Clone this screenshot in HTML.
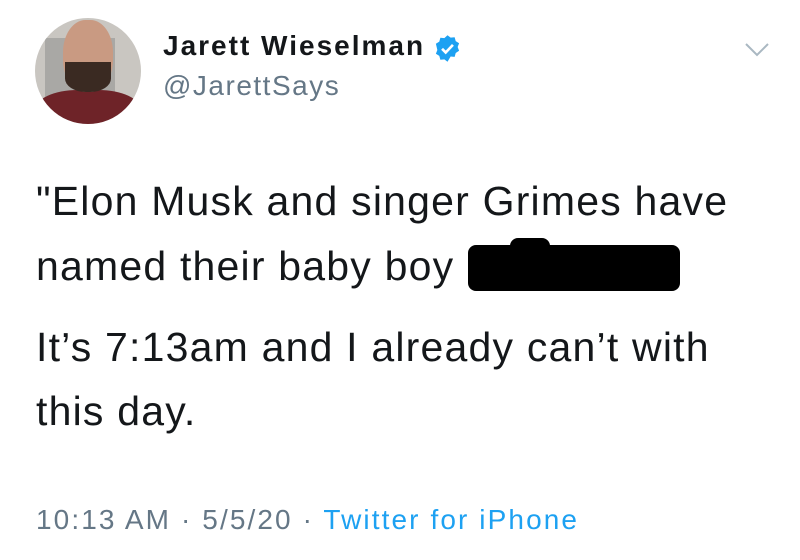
<!DOCTYPE html>
<html><head><style>
body{margin:0;width:800px;height:560px;background:#fff;font-family:"Liberation Sans",sans-serif;position:relative;overflow:hidden}
.a{position:absolute;white-space:nowrap}
.t{font-size:41px;color:#14171a;letter-spacing:1.2px}
</style></head><body>
<div class="a" style="left:35px;top:18px;width:106px;height:106px;border-radius:50%;overflow:hidden;background:#c9c6c1">
 <div class="a" style="left:10px;top:20px;width:70px;height:60px;background:#a9a8a5"></div>
 <div class="a" style="left:0;top:72px;width:106px;height:50px;border-radius:40% 40% 0 0;background:#6e2328"></div>
 <div class="a" style="left:28px;top:2px;width:50px;height:72px;border-radius:45%;background:#c99a82"></div>
 <div class="a" style="left:30px;top:44px;width:46px;height:30px;border-radius:0 0 45% 45%;background:#3a2a22"></div>
</div>
<div class="a" style="left:163px;top:30px;font-size:28px;font-weight:bold;color:#14171a;letter-spacing:2px">Jarett Wieselman</div>
<svg class="a" style="left:433px;top:34px" width="29" height="29" viewBox="0 0 24 24"><path fill="#1da1f2" d="M12 1l2.6 2 3.3-.3.9 3.2 2.8 1.8-1.2 3.1 1.2 3.1-2.8 1.8-.9 3.2-3.3-.3L12 23l-2.6-2-3.3.3-.9-3.2-2.8-1.8 1.2-3.1L2.4 8.1l2.8-1.8.9-3.2 3.3.3z"/><path d="M7.5 12.3l3 3 6-6.3" stroke="#fff" stroke-width="2.2" fill="none"/></svg>
<div class="a" style="left:163px;top:70px;font-size:28px;color:#657786;letter-spacing:1.5px">@JarettSays</div>
<svg class="a" style="left:744px;top:42px" width="26" height="16"><path d="M2 2l11 11 11-11" stroke="#aab8c2" stroke-width="2" fill="none"/></svg>
<div class="a t" style="left:36px;top:178px">"Elon Musk and singer Grimes have</div>
<div class="a t" style="left:36px;top:243px">named their baby boy</div>
<div class="a" style="left:468px;top:245px;width:212px;height:46px;background:#000;border-radius:8px"></div>
<div class="a" style="left:510px;top:238px;width:40px;height:16px;background:#000;border-radius:8px"></div>
<div class="a t" style="left:36px;top:324px">It’s 7:13am and I already can’t with</div>
<div class="a t" style="left:36px;top:388px">this day.</div>
<div class="a" style="left:36px;top:504px;font-size:28px;color:#657786;letter-spacing:2.1px">10:13 AM · 5/5/20 · <span style="color:#1da1f2">Twitter for iPhone</span></div>
</body></html>
